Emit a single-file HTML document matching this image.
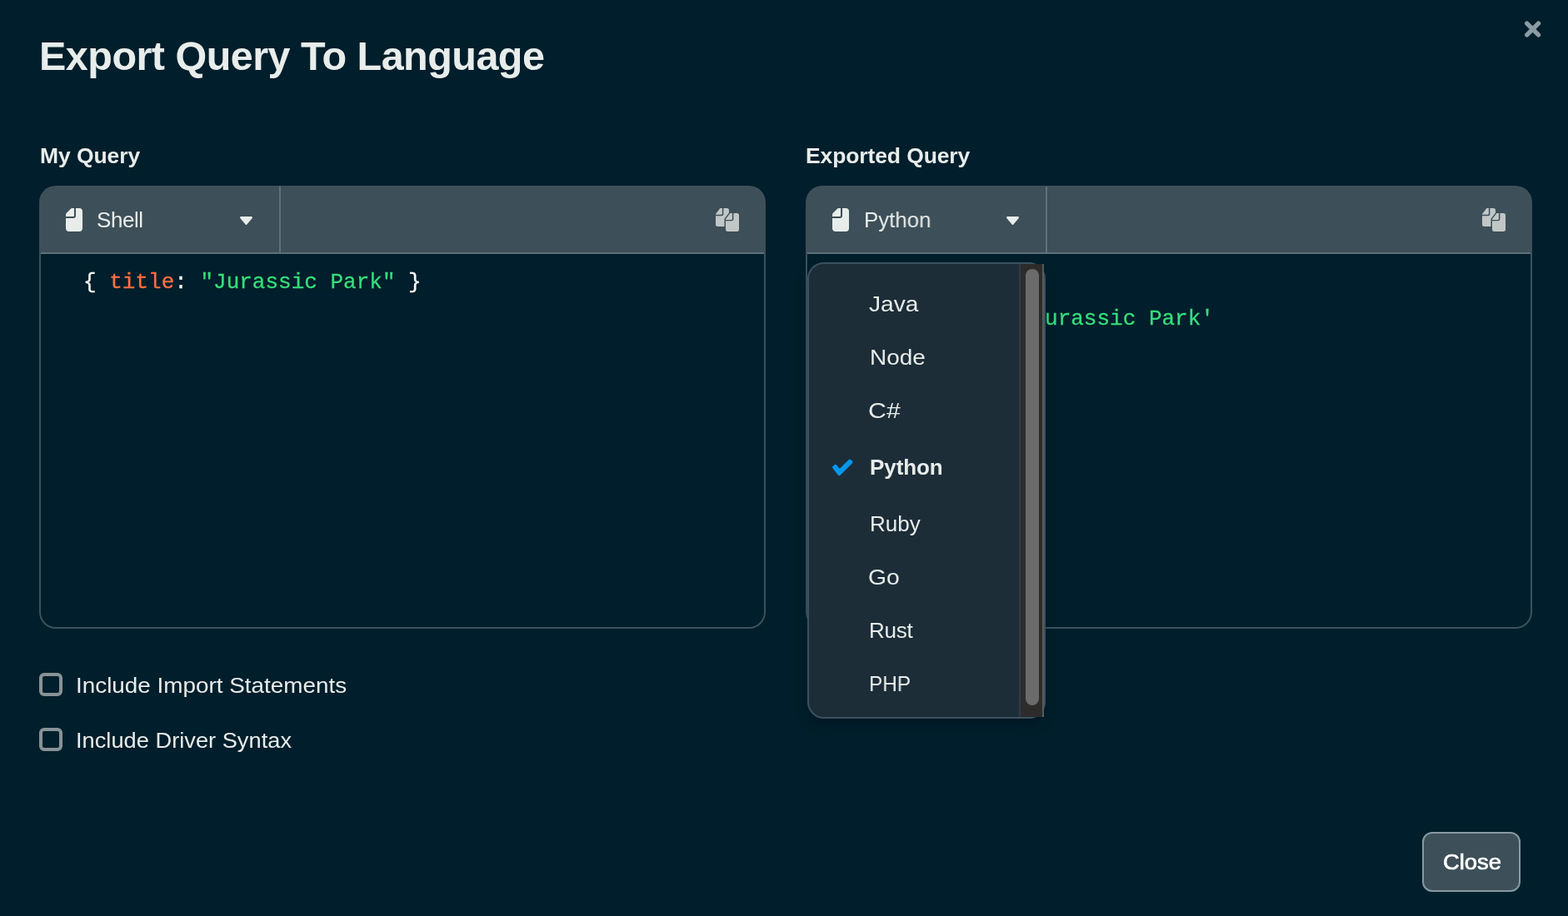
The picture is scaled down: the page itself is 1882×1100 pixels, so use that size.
<!DOCTYPE html>
<html lang="en">
<head>
<meta charset="utf-8">
<title>Export Query To Language</title>
<style>
*{box-sizing:border-box;margin:0;padding:0}
html,body{width:1882px;height:1100px;overflow:hidden;background:#001E2B}
body{position:relative;font-family:"Liberation Sans",sans-serif;color:#E8EDEB;-webkit-font-smoothing:antialiased}
.abs{position:absolute}
.t{position:absolute;white-space:nowrap;line-height:1;will-change:transform}
h1.t{font-size:48.5px;font-weight:700;color:#E8EDEB}
.lbl{font-size:26.5px;font-weight:700;color:#E8EDEB}
.panel{position:absolute;top:223px;width:872px;height:532px;border-radius:20px;background:linear-gradient(#3D4F58 0,#3D4F58 82px,#3A525F 82px,#3A525F 100%)}
.body{position:absolute;left:2px;right:2px;top:82px;bottom:2px;background:#001E2B;border-radius:0 0 18px 18px}
.hdr{position:absolute;left:2px;top:80px;right:2px;height:2px;background:#5C717C}
.sep{position:absolute;left:288px;top:1px;width:2px;height:80px;background:#5C717C}
.sel{font-size:26px;color:#E8EDEB}
.code{position:absolute;will-change:transform;-webkit-text-stroke:0.3px;font-family:"Liberation Mono","DejaVu Sans Mono",monospace;font-size:26px;line-height:44px;white-space:pre;color:#F9FBFA}
.k{color:#FF6F44}.s{color:#35DE7B}
.menu{position:absolute;left:969px;top:315px;width:286px;height:548px;border:2px solid #3A525F;border-radius:20px;background:#1C2D38;box-shadow:0 8px 20px -8px rgba(0,0,0,.45)}
.track{position:absolute;left:1223px;top:317px;width:30px;height:544px;background:#2D2C2B;border-left:2px solid #2F3B45;border-right:2px solid #565C5F}
.thumb{position:absolute;left:1231px;top:323px;width:16px;height:524px;border-radius:8px;background:#6B6B6B}
.mi{font-size:26px;color:#E8EDEB}
.mi.b{font-weight:700}
.cb{position:absolute;left:47px;width:28px;height:28px;border:4px solid #889397;border-radius:6px}
.cbl{font-size:26px;color:#E8EDEB}
.btn{position:absolute;left:1707px;top:999px;width:118px;height:72px;border:2px solid #869AA4;border-radius:12px;background:#3D4F58}
.btnt{font-size:26px;color:#FFFFFF;font-weight:400;-webkit-text-stroke:0.7px #FFFFFF}
svg{position:absolute;display:block}
</style>
</head>
<body>
<h1 class="t" id="title" style="left:47.1px;top:43.2px;letter-spacing:-0.52px">Export Query To Language</h1>

<svg id="xicon" style="left:1824px;top:19px" width="32" height="32" viewBox="0 0 32 32"><path d="M8.700 9.100L22.500 22.900M22.500 9.100L8.700 22.900" fill="none" stroke="#8A9CA5" stroke-width="5.400" stroke-linecap="round"/></svg>

<div class="t lbl" id="l1" style="left:47.8px;top:174.0px;letter-spacing:-0.08px">My Query</div>
<div class="t lbl" id="l2" style="left:966.8px;top:174.0px;letter-spacing:-0.12px">Exported Query</div>

<!-- left panel -->
<div class="panel" style="left:47px">
  <div class="body"></div><div class="hdr"></div><div class="sep"></div>
</div>
<svg style="left:73px;top:248px" width="32" height="32" viewBox="0 0 16 16"><path fill="#E8EDEB" d="M3 13V7h4.5A1.5 1.5 0 0 0 9 5.5V1h2a2 2 0 0 1 2 2v10a2 2 0 0 1-2 2H5a2 2 0 0 1-2-2Z"/><path fill="#E8EDEB" d="M8 1V5.500a.5.500 0 0 1-.5.500H3V4.800Q3 4.300 3.350 3.950L5.950 1.350Q6.300 1 6.800 1H8Z"/></svg>
<div class="t sel" id="shell" style="left:116.2px;top:251.3px;letter-spacing:-0.46px">Shell</div>
<svg style="left:279px;top:248px" width="32" height="32" viewBox="0 0 16 16"><path fill="#E8EDEB" d="M8.679 10.796a.554.554 0 0 1-.858 0L4.640 6.976C4.320 6.594 4.582 6 5.069 6h6.362c.487 0 .748.594.43.976l-3.182 3.820Z"/></svg>
<svg class="copy" style="left:857px;top:248px" width="32" height="32" viewBox="0 0 32 32"><g transform="translate(2 2)" fill="#C1C7C6"><path d="M0 7.8V7L5.4 0H7.9V6.6Q7.9 7.8 6.7 7.8Z"/><path d="M9.4 0H13.5A2.5 2.5 0 0 1 16 2.5V19.5A2.5 2.5 0 0 1 13.500 22H2.5A2.5 2.5 0 0 1 0 19.5V9.2H6.9A2.5 2.5 0 0 0 9.4 6.7Z"/></g><g transform="translate(14 8.100)"><path d="M0 7L5.4 0H13.5A2.5 2.5 0 0 1 16 2.5V19.5A2.5 2.5 0 0 1 13.500 22H2.5A2.5 2.5 0 0 1 0 19.5Z" fill="#3D4F58" stroke="#3D4F58" stroke-width="3" stroke-linejoin="round"/><path fill="#C1C7C6" d="M0 7.8V7L5.4 0H7.9V6.6Q7.9 7.8 6.7 7.8Z"/><path fill="#C1C7C6" d="M9.4 0H13.5A2.5 2.5 0 0 1 16 2.5V19.5A2.5 2.5 0 0 1 13.500 22H2.5A2.5 2.5 0 0 1 0 19.5V9.2H6.9A2.5 2.5 0 0 0 9.4 6.7Z"/></g></svg>
<div class="code" id="code1" style="left:100px;top:316.6px">{ <span class="k">title</span>: <span class="s">"Jurassic Park"</span> }</div>

<!-- right panel -->
<div class="panel" style="left:967px">
  <div class="body"></div><div class="hdr"></div><div class="sep"></div>
</div>
<svg style="left:993px;top:248px" width="32" height="32" viewBox="0 0 16 16"><path fill="#E8EDEB" d="M3 13V7h4.5A1.5 1.5 0 0 0 9 5.5V1h2a2 2 0 0 1 2 2v10a2 2 0 0 1-2 2H5a2 2 0 0 1-2-2Z"/><path fill="#E8EDEB" d="M8 1V5.500a.5.500 0 0 1-.5.500H3V4.800Q3 4.300 3.350 3.950L5.950 1.350Q6.300 1 6.800 1H8Z"/></svg>
<div class="t sel" id="python" style="left:1037.0px;top:251.3px;transform-origin:0 0;transform:scaleX(0.9936)">Python</div>
<svg style="left:1199px;top:248px" width="32" height="32" viewBox="0 0 16 16"><path fill="#E8EDEB" d="M8.679 10.796a.554.554 0 0 1-.858 0L4.640 6.976C4.320 6.594 4.582 6 5.069 6h6.362c.487 0 .748.594.43.976l-3.182 3.820Z"/></svg>
<svg class="copy" style="left:1777px;top:248px" width="32" height="32" viewBox="0 0 32 32"><g transform="translate(2 2)" fill="#C1C7C6"><path d="M0 7.8V7L5.4 0H7.9V6.6Q7.9 7.8 6.7 7.8Z"/><path d="M9.4 0H13.5A2.5 2.5 0 0 1 16 2.5V19.5A2.5 2.5 0 0 1 13.500 22H2.5A2.5 2.5 0 0 1 0 19.5V9.2H6.9A2.5 2.5 0 0 0 9.4 6.7Z"/></g><g transform="translate(14 8.100)"><path d="M0 7L5.4 0H13.5A2.5 2.5 0 0 1 16 2.5V19.5A2.5 2.5 0 0 1 13.500 22H2.5A2.5 2.5 0 0 1 0 19.5Z" fill="#3D4F58" stroke="#3D4F58" stroke-width="3" stroke-linejoin="round"/><path fill="#C1C7C6" d="M0 7.8V7L5.4 0H7.9V6.6Q7.9 7.8 6.7 7.8Z"/><path fill="#C1C7C6" d="M9.4 0H13.5A2.5 2.5 0 0 1 16 2.5V19.5A2.5 2.5 0 0 1 13.500 22H2.5A2.5 2.5 0 0 1 0 19.5V9.2H6.9A2.5 2.5 0 0 0 9.4 6.7Z"/></g></svg>
<div class="code" id="code2" style="left:1020px;top:316.6px">{
    <span class="s">'title'</span>: <span class="s">'Jurassic Park'</span>
}</div>

<!-- dropdown menu -->
<div class="menu"></div>
<div class="track"></div>
<div class="thumb"></div>
<div class="t mi" id="m1" style="left:1043.2px;top:352.2px;transform-origin:0 0;transform:scaleX(1.0818)">Java</div>
<div class="t mi" id="m2" style="left:1044.2px;top:416.2px;transform-origin:0 0;transform:scaleX(1.0737)">Node</div>
<div class="t mi" id="m3" style="left:1041.9px;top:480.2px;transform-origin:0 0;transform:scaleX(1.1664)">C#</div>
<svg id="chk" style="left:995px;top:545px" width="32" height="32" viewBox="0 0 16 16"><path fill="#0498EC" fill-rule="evenodd" d="M6.306 9.050l5.455-5.455a1 1 0 0 1 1.414 0l.707.707a1 1 0 0 1 0 1.414l-7.067 7.067a1 1 0 0 1-1.500-.098l-3.049-4.097a1 1 0 0 1 .205-1.399l.803-.597a1 1 0 0 1 1.399.205l1.633 2.253Z"/></svg>
<div class="t mi b" id="m4" style="left:1043.6px;top:548.0px;letter-spacing:-0.08px">Python</div>
<div class="t mi" id="m5" style="left:1043.6px;top:615.9px;letter-spacing:0.04px">Ruby</div>
<div class="t mi" id="m6" style="left:1041.9px;top:679.9px;transform-origin:0 0;transform:scaleX(1.0875)">Go</div>
<div class="t mi" id="m7" style="left:1043.0px;top:744.0px;letter-spacing:-0.26px">Rust</div>
<div class="t mi" id="m8" style="left:1043.0px;top:808.1px;transform-origin:0 0;transform:scaleX(0.9388)">PHP</div>

<!-- checkboxes -->
<div class="cb" style="top:808px"></div>
<div class="t cbl" id="c1" style="left:91.0px;top:810.0px;transform-origin:0 0;transform:scaleX(1.0713)">Include Import Statements</div>
<div class="cb" style="top:874px"></div>
<div class="t cbl" id="c2" style="left:91.0px;top:875.8px;transform-origin:0 0;transform:scaleX(1.0482)">Include Driver Syntax</div>

<!-- close button -->
<div class="btn"></div>
<div class="t btnt" id="close" style="left:1732.1px;top:1021.8px;transform-origin:0 0;transform:scaleX(1.0517)">Close</div>
</body>
</html>
